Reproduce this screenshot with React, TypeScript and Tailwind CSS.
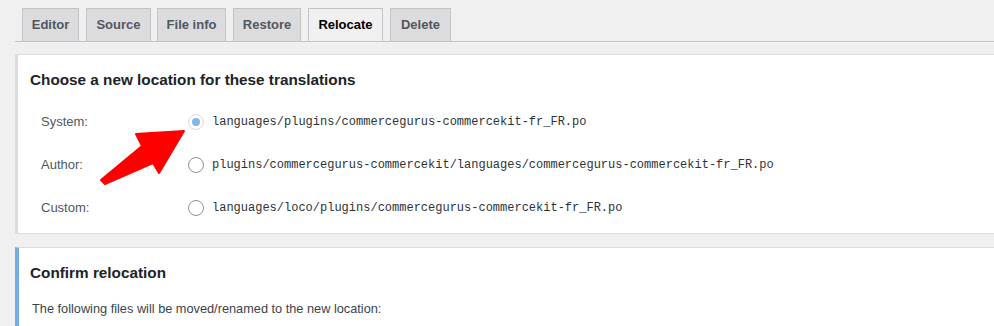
import React from "react";

const tabs = [
  { label: "Editor", cls: "w-[57px] ml-0" },
  { label: "Source", cls: "w-[65px] ml-[7px]" },
  { label: "File info", cls: "w-[69px] ml-[6px]" },
  { label: "Restore", cls: "w-[68px] ml-[7px]" },
  { label: "Relocate", cls: "w-[75px] ml-[7px]", active: true },
  { label: "Delete", cls: "w-[61px] ml-[7px]" },
];

const rows = [
  { label: "System:", path: "languages/plugins/commercegurus-commercekit-fr_FR.po", checked: true },
  { label: "Author:", path: "plugins/commercegurus-commercekit/languages/commercegurus-commercekit-fr_FR.po" },
  { label: "Custom:", path: "languages/loco/plugins/commercegurus-commercekit-fr_FR.po" },
];

function Radio({ checked }: { checked?: boolean }) {
  return checked ? (
    <span className="flex h-[16px] w-[16px] items-center justify-center rounded-full border border-[#dcdcde] bg-white">
      <span className="h-[8px] w-[8px] rounded-full bg-[#86b6e4]" />
    </span>
  ) : (
    <span className="block h-[16px] w-[16px] rounded-full border border-[#8c8f94] bg-white" />
  );
}

export default function App() {
  return (
    <div
      className="relative h-[326px] w-[994px] overflow-hidden bg-[#f0f0f1] text-[#1d2327]"
      style={{ fontFamily: '"Liberation Sans", Arial, sans-serif' }}
    >
      {/* Tabs */}
      <div className="ml-[15px] flex border-b border-[#c3c4c7] pl-[7px] pt-[8px]">
        {tabs.map((t) => (
          <div
            key={t.label}
            className={`${t.cls} flex h-[33px] items-center justify-center border border-b-0 text-[13px] font-bold ${
              t.active
                ? "border-[#c3c4c7] bg-[#f0f0f1] text-[#000000]"
                : "border-[#c3c4c7] bg-[#dcdcde] text-[#50575e]"
            }`}
          >
            {t.label}
          </div>
        ))}
      </div>

      {/* Panel 1 */}
      <div className="ml-[15px] mt-[12px] h-[180px] border-y border-l-[3px] border-[#dcdcde] bg-white pl-[12px] pt-[15px]">
        <h2 className="text-[15.3px] font-bold leading-[20px] text-[#1d2327]">
          Choose a new location for these translations
        </h2>
        <div className="mt-[10px] flex flex-col">
          {rows.map((r) => (
            <div key={r.label} className="flex h-[43px] items-center">
              <div className="ml-[11px] w-[147px] text-[13px] text-[#50575e]">{r.label}</div>
              <Radio checked={r.checked} />
              <span
                className="ml-[8px] text-[12px] text-[#2c3338]"
                style={{ fontFamily: '"Liberation Mono", "DejaVu Sans Mono", monospace' }}
              >
                {r.path}
              </span>
            </div>
          ))}
        </div>
      </div>

      {/* Panel 2 */}
      <div className="ml-[15px] mt-[13px] h-[120px] border-t border-l-4 border-t-[#dcdcde] border-l-[#72aee6] bg-white pl-[11px] pt-[15px]">
        <h2 className="text-[15.3px] font-bold leading-[20px] text-[#1d2327]">Confirm relocation</h2>
        <p className="ml-[2px] mt-[17px] text-[12.75px] leading-[18px] text-[#3c434a]">
          The following files will be moved/renamed to the new location:
        </p>
      </div>

      {/* Red arrow annotation */}
      <svg
        className="pointer-events-none absolute left-0 top-0"
        width="994"
        height="326"
        viewBox="0 0 994 326"
      >
        <polygon
          points="184,131 136,134 142,146 101,180 105,184 153,163 159,173"
          fill="#ff0000"
          stroke="#ff0000"
          strokeWidth="2"
          strokeLinejoin="round"
        />
      </svg>
    </div>
  );
}
